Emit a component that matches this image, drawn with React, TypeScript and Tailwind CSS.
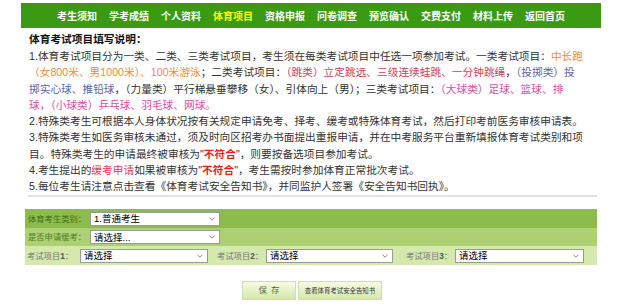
import React from "react";

const navItems = ["考生须知", "学考成绩", "个人资料", "体育项目", "资格申报", "问卷调查", "预览确认", "交费支付", "材料上传", "返回首页"];

function Chevron() {
  return (
    <svg width="6" height="4" viewBox="0 0 6 4" className="shrink-0">
      <path d="M0.5 0.8 L3 3.2 L5.5 0.8" fill="none" stroke="#777" strokeWidth="0.9" />
    </svg>
  );
}

function FakeSelect({ text, w }: { text: string; w: string }) {
  return (
    <div className={`${w} h-[14px] bg-white border border-[#9a9a9a] flex items-center justify-between pl-[3px] pr-[4px] text-[9.5px] text-black leading-none`}>
      <span>{text}</span>
      <Chevron />
    </div>
  );
}

const O = "text-[#ef8a44]";
const R = "text-[#d2405a]";
const P = "text-[#6062a8]";
const M = "text-[#dd4aa6]";
const RB = "text-[#ee1c1c] font-bold";

export default function App() {
  return (
    <div className="w-[621px] h-[305px] bg-white font-['Liberation_Sans','Noto_Sans_CJK_SC',sans-serif] overflow-hidden">
      <div className="ml-[21px] mt-[3px] w-[580px] h-[25px] bg-[#3b9a14] flex items-center justify-center gap-[12px] pt-[3px] text-[10px] font-bold text-white leading-none">
        {navItems.map((n) => (
          <span key={n} className={n === "体育项目" ? "text-[#ffff00]" : ""}>{n}</span>
        ))}
      </div>

      <div className="ml-[29px] mt-[3px] text-[10.7px] text-[#333] whitespace-nowrap">
        <div className="h-[16px] leading-[16px] font-bold text-[#111]">体育考试项目填写说明：</div>
        <div className="mt-[1px] leading-[16.25px]">
          <div>1.体育考试项目分为一类、二类、三类考试项目，考生须在每类考试项目中任选一项参加考试。一类考试项目：<span className={O}>中长跑</span></div>
          <div><span className={O}>（女800米、男1000米）、100米游泳</span>；二类考试项目：<span className={R}>（跳类）立定跳远、三级连续蛙跳、一分钟跳绳</span>，<span className={P}>（投掷类）投</span></div>
          <div><span className={P}>掷实心球、推铅球</span>，（力量类）平行梯悬垂攀移（女）、引体向上（男）；三类考试项目：<span className={M}>（大球类）足球、篮球、排</span></div>
          <div><span className={M}>球，（小球类）乒乓球、羽毛球、网球。</span></div>
          <div>2.特殊类考生可根据本人身体状况按有关规定申请免考、择考、缓考或特殊体育考试，然后打印考前医务审核申请表。</div>
          <div>3.特殊类考生如医务审核未通过，须及时向区招考办书面提出重报申请，并在中考服务平台重新填报体育考试类别和项</div>
          <div>目。特殊类考生的申请最终被审核为"<span className={RB}>不符合</span>"，则要按备选项目参加考试。</div>
          <div>4.考生提出的<span className="text-[#ee3a55]">缓考申请</span>如果被审核为"<span className={RB}>不符合</span>"，考生需按时参加体育正常批次考试。</div>
          <div>5.每位考生请注意点击查看《体育考试安全告知书》，并同监护人签署《安全告知书回执》。</div>
        </div>
      </div>

      <div className="ml-[28px] mt-[1px] w-[569px] h-[2px] bg-[#e2e2e2]" />

      <div className="ml-[25px] mt-[12px] w-[572px] text-[8.3px] leading-none">
        <div className="h-[19px] bg-[#8dbb4e] flex items-center pl-[3px]">
          <span className="w-[62px] text-[#3f6e16]">体育考生类别：</span>
          <FakeSelect text="1.普通考生" w="w-[130px]" />
        </div>
        <div className="h-[18px] bg-[#acd073] flex items-center pl-[3px]">
          <span className="w-[62px] text-[#4f7f22]">是否申请缓考：</span>
          <FakeSelect text="请选择..." w="w-[130px]" />
        </div>
        <div className="h-[19px] bg-[#d5e8ae] flex items-center pl-[2px] text-[#777]">
          <span className="w-[53px]">考试项目<b className="text-[#555]">1</b>：</span>
          <FakeSelect text="请选择" w="w-[128px]" />
          <span className="ml-[9px] w-[49px]">考试项目<b className="text-[#555]">2</b>：</span>
          <FakeSelect text="请选择" w="w-[127px]" />
          <span className="ml-[13px] w-[49px]">考试项目<b className="text-[#555]">3</b>：</span>
          <FakeSelect text="请选择" w="w-[129px]" />
        </div>
      </div>

      <div className="mt-[16px] flex justify-center gap-[2px] pl-[3px]">
        <div className="w-[54px] h-[19px] border border-[#cfe0a8] bg-gradient-to-b from-[#f7fbea] to-[#d3e7a4] flex items-center justify-center text-[8.5px] text-[#56702c] tracking-[4px] pl-[4px]">保存</div>
        <div className="w-[84px] h-[19px] border border-[#cfe0a8] bg-gradient-to-b from-[#f7fbea] to-[#d3e7a4] flex items-center justify-center text-[6.4px] text-[#333]">查看体育考试安全告知书</div>
      </div>
    </div>
  );
}
